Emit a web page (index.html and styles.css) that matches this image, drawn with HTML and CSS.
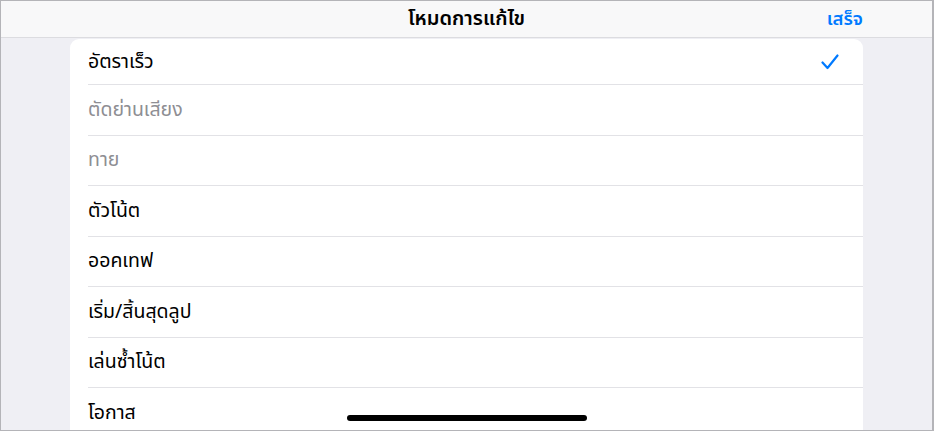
FILE: index.html
```html
<!DOCTYPE html>
<html>
    <head>
        <title>โหมดการแก้ไข</title>
        <link rel="stylesheet" href="styles.css">
    </head>
    <body>
        <div class="frame">
            <div class="navbar">
                <span class="nav-title">โหมดการแก้ไข</span>
                <span class="nav-done">เสร็จ</span>
            </div>
            <div class="content">
                <ul class="list">
                    <li class="row">
                        <span>อัตราเร็ว</span>
                        <svg class="check" width="18" height="16" viewBox="0 0 18 16">
                            <path d="M1.5 8.5 L6.5 14 L16.5 1.5" fill="none" stroke="#007aff" stroke-width="2.2" stroke-linecap="round" stroke-linejoin="round"/>
                        </svg>
                    </li>
                    <li class="row disabled"><span>ตัดย่านเสียง</span></li>
                    <li class="row disabled"><span>ทาย</span></li>
                    <li class="row"><span>ตัวโน้ต</span></li>
                    <li class="row"><span>ออคเทฟ</span></li>
                    <li class="row"><span>เริ่ม/สิ้นสุดลูป</span></li>
                    <li class="row"><span>เล่นซ้ำโน้ต</span></li>
                    <li class="row"><span>โอกาส</span></li>
                </ul>
                <div class="home-bar"></div>
            </div>
        </div>
    </body>
</html>
```

FILE: styles.css
```css
body {
    margin: 0;
    font-family: "Noto Sans Thai", "Noto Sans", "DejaVu Sans", sans-serif;
    background: #fff;
}
.frame {
    box-sizing: border-box;
    width: 934px;
    height: 431px;
    border: 1px solid #b4b4b8;
    border-right-width: 2px;
    overflow: hidden;
    background: #efeff4;
    display: flex;
    flex-direction: column;
}
.navbar {
    flex: none;
    height: 36px;
    display: flex;
    align-items: center;
    justify-content: center;
    position: relative;
    background: #f8f8f9;
    border-bottom: 1px solid #dcdce0;
}
.nav-title {
    font-size: 20px;
    font-weight: 600;
    color: #000;
}
.nav-done {
    position: absolute;
    right: 69px;
    font-size: 18.5px;
    font-weight: 600;
    color: #007aff;
}
.content {
    flex: 1;
    min-height: 0;
    position: relative;
    padding: 1px 69px 0 69px;
}
.list {
    margin: 0;
    padding: 0 0 0 18px;
    list-style: none;
    background: #fff;
    border-radius: 9px 9px 0 0;
    height: 100%;
    overflow: hidden;
}
.row {
    height: 49.5px;
    display: flex;
    align-items: center;
    justify-content: space-between;
    padding-right: 24px;
    border-bottom: 1px solid #e2e2e6;
    font-size: 19.5px;
    color: #000;
}
.row:first-child {
    height: 45px;
}
.row.disabled {
    color: #8e8e93;
}
.home-bar {
    position: absolute;
    left: 346px;
    bottom: 9px;
    width: 240px;
    height: 6px;
    border-radius: 3px;
    background: #000;
}
```
